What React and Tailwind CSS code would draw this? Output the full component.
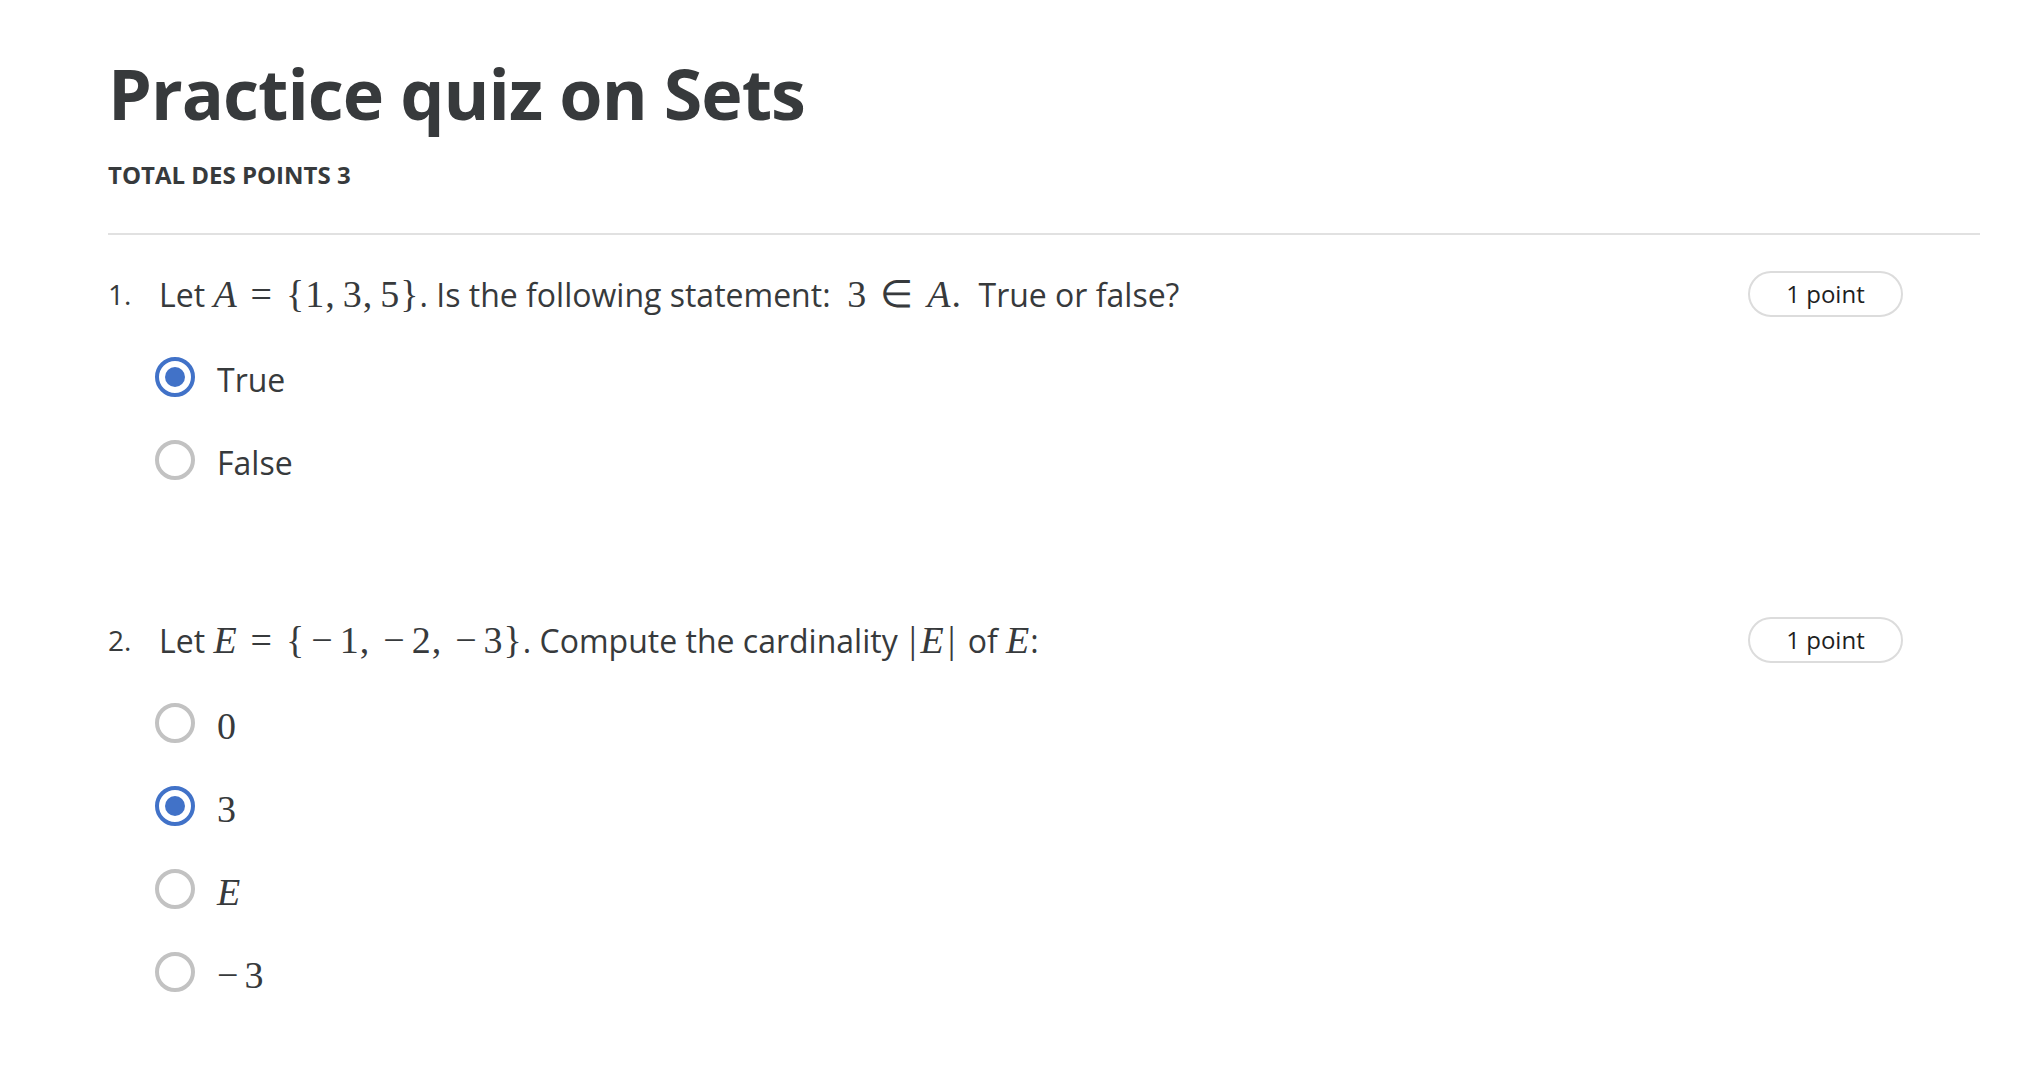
import React from 'react';

const sans = { fontFamily: '"Open Sans", "Noto Sans", sans-serif' };

function M({ children, italic }) {
  return (
    <span className={`font-['Liberation_Serif',serif] text-[38px] tracking-[1px] ${italic ? 'italic' : ''}`}>
      {children}
    </span>
  );
}

// relation symbol with KaTeX-like thick spaces
function Rel({ children }) {
  return <M><span className="px-[13px]">{children}</span></M>;
}

function Minus({ tight }) {
  return <span className={tight ? 'pr-[5px]' : 'px-[6px]'}>−</span>;
}

function Comma() {
  return <span className="mr-[7px]">,</span>;
}

function Radio({ checked }) {
  return checked ? (
    <span className="flex h-[40px] w-[40px] shrink-0 items-center justify-center rounded-full border-[4px] border-[#4172c8]">
      <span className="h-[20px] w-[20px] rounded-full bg-[#4172c8]" />
    </span>
  ) : (
    <span className="h-[40px] w-[40px] shrink-0 rounded-full border-[4px] border-[#c2c2c2]" />
  );
}

function Option({ checked, children }) {
  return (
    <div className="flex h-[40px] items-center">
      <Radio checked={checked} />
      <div className="ml-[22px] pt-[6px] text-[32px] leading-[40px]">{children}</div>
    </div>
  );
}

function Question({ num, children, options }) {
  return (
    <div>
      <div className="flex h-[46px] items-center justify-between pr-[77px]">
        <div className="flex items-center">
          <span className="w-[51px] text-[28px] leading-[46px]">{num}.</span>
          <span className="text-[32px] leading-[46px]">{children}</span>
        </div>
        <span className="flex h-[46px] w-[155px] items-center justify-center rounded-full border-2 border-[#dcdcdc] text-[24px] text-[#1f1f1f]">
          1 point
        </span>
      </div>
      <div className="mt-[40px] flex flex-col gap-[43px] pl-[47px]">
        {options.map((o, i) => (
          <Option key={i} checked={o.checked}>{o.label}</Option>
        ))}
      </div>
    </div>
  );
}

export default function App() {
  return (
    <div className="min-h-screen bg-white pl-[108px] pr-[44px] pt-[51px] text-[#373a3c]" style={sans}>
      <h1 className="text-[70px] font-bold leading-[85px] tracking-[-1px]">Practice quiz on Sets</h1>
      <div className="mt-[23px] text-[24px] font-bold leading-[32px]">TOTAL DES POINTS 3</div>
      <div className="mt-[42px] h-[2px] bg-[#e1e1e1]" />

      <div className="mt-[36px]">
        <Question
          num="1"
          options={[
            { checked: true, label: 'True' },
            { checked: false, label: 'False' },
          ]}
        >
          Let <M italic>A</M><Rel>=</Rel><M>{'{'}1<Comma />3<Comma />5{'}'}</M>. Is the following statement:&nbsp; <M>3</M><Rel>∈</Rel><M italic>A</M><M>.</M>&nbsp; True or false?
        </Question>
      </div>

      <div className="mt-[137px]">
        <Question
          num="2"
          options={[
            { checked: false, label: <M>0</M> },
            { checked: true, label: <M>3</M> },
            { checked: false, label: <M italic>E</M> },
            { checked: false, label: <M><Minus tight />3</M> },
          ]}
        >
          Let <M italic>E</M><Rel>=</Rel><M>{'{'}<Minus />1<Comma /><Minus />2<Comma /><Minus />3{'}'}</M>. Compute the cardinality <M><span className="px-[3px]">|</span></M><M italic>E</M><M><span className="px-[3px]">|</span></M> of <M italic>E</M>:
        </Question>
      </div>
    </div>
  );
}
